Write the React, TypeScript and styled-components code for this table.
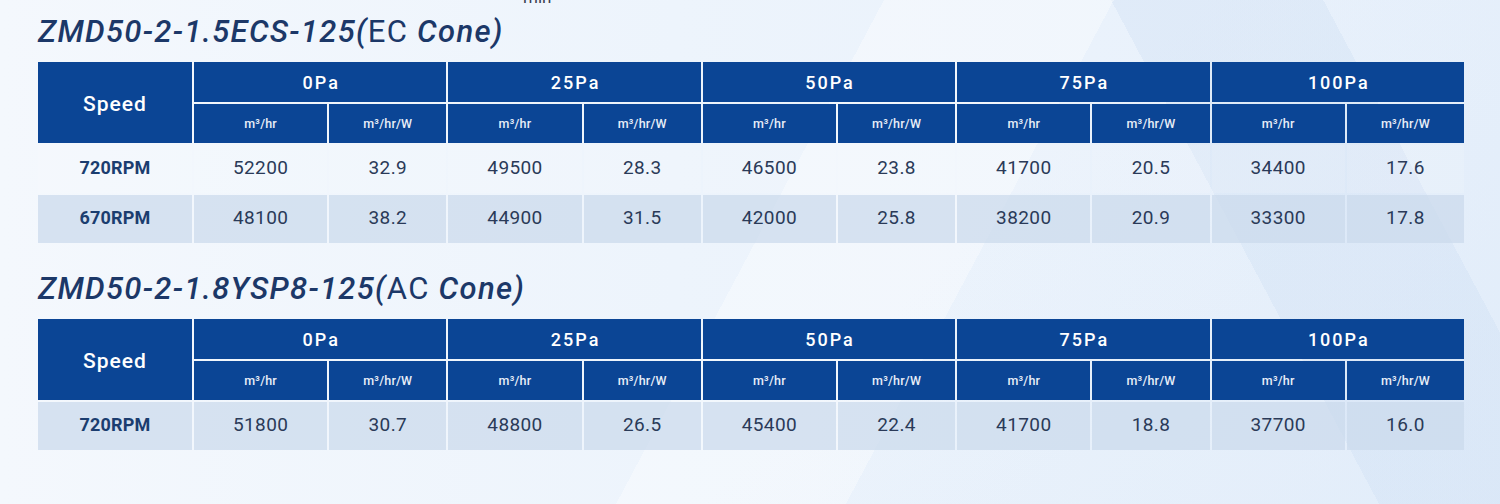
import React from "react";
import styled, { createGlobalStyle } from "styled-components";

const GlobalStyle = createGlobalStyle`
  html, body { margin: 0; padding: 0; }
  body { font-family: Roboto, "Liberation Sans", Arial, sans-serif; }
`;

const Page = styled.div`
  width: 1500px;
  height: 504px;
  box-sizing: border-box;
  padding-left: 38px;
  overflow: hidden;
  background:
    linear-gradient(118deg, transparent 0%, transparent 50%, rgba(255,255,255,0.35) 50%, rgba(255,255,255,0.35) 63%, transparent 63%),
    linear-gradient(62deg, transparent 0%, transparent 78%, rgba(205,222,243,0.35) 78%, rgba(205,222,243,0.35) 90%, transparent 90%),
    linear-gradient(135deg, rgba(255,255,255,0) 60%, rgba(220,233,248,0.5) 100%),
    linear-gradient(90deg, #f4f8fd 0%, #edf4fc 45%, #e7f0fb 100%);
`;

const TopCrop = styled.div`
  height: 5px;
  overflow: hidden;
  padding-left: 485px;
  color: #3a4150;
  font-size: 17px;
  line-height: 17px;
  span { display: block; margin-top: -11px; }
`;

const Section = styled.section<{ $first?: boolean }>`
  margin-top: ${(p) => (p.$first ? "11px" : "30px")};
`;

const Title = styled.h2`
  margin: 0 0 15px 0;
  font-family: Roboto, "Liberation Sans", Arial, sans-serif;
  font-style: italic;
  font-weight: 500;
  font-size: 31px;
  line-height: 31px;
  color: #1c3868;
  letter-spacing: 1.3px;
`;

const Upright = styled.span`
  font-style: normal;
  font-weight: 400;
`;

const Grid = styled.div<{ $rows: number }>`
  width: 1426px;
  display: grid;
  grid-template-columns: 154px repeat(5, 133fr 117fr);
  grid-template-rows: 40px 39px repeat(${(p) => p.$rows}, 48px);
  gap: 2px;
`;

const HeadCell = styled.div<{ $span?: number; $rowSpan?: number }>`
  background: #0b4595;
  color: #ffffff;
  display: flex;
  align-items: center;
  justify-content: center;
  grid-column: span ${(p) => p.$span ?? 1};
  grid-row: span ${(p) => p.$rowSpan ?? 1};
`;

const SpeedHead = styled(HeadCell)`
  font-size: 21px;
  font-weight: 500;
  letter-spacing: 1px;
  padding-top: 3px;
`;

const PressureHead = styled(HeadCell)`
  font-size: 18px;
  font-weight: 500;
  letter-spacing: 2px;
  padding-left: 2px;
`;

const UnitHead = styled(HeadCell)`
  font-size: 12.5px;
  font-weight: 500;
  letter-spacing: 0.2px;
  color: #e8eef8;
`;

const Cell = styled.div<{ $alt?: boolean }>`
  background: ${(p) => (p.$alt ? "rgba(203,218,236,0.72)" : "rgba(255,255,255,0.12)")};
  display: flex;
  align-items: center;
  justify-content: center;
  padding-bottom: 3px;
  font-size: 19px;
  letter-spacing: 0.4px;
  color: #2a3a58;
`;

const SpeedCell = styled(Cell)`
  font-size: 18px;
  font-weight: 700;
  letter-spacing: 0.2px;
  color: #1b3d6f;
`;

const pressures = ["0Pa", "25Pa", "50Pa", "75Pa", "100Pa"];

type Row = { speed: string; values: string[]; alt?: boolean };

const PerfTable: React.FC<{ rows: Row[] }> = ({ rows }) => (
  <Grid $rows={rows.length}>
    <SpeedHead $rowSpan={2}>Speed</SpeedHead>
    {pressures.map((p) => (
      <PressureHead key={p} $span={2}>
        {p}
      </PressureHead>
    ))}
    {pressures.map((p) => (
      <React.Fragment key={p + "u"}>
        <UnitHead>m³/hr</UnitHead>
        <UnitHead>m³/hr/W</UnitHead>
      </React.Fragment>
    ))}
    {rows.map((r) => (
      <React.Fragment key={r.speed + r.values[0]}>
        <SpeedCell $alt={r.alt}>{r.speed}</SpeedCell>
        {r.values.map((v, i) => (
          <Cell key={i} $alt={r.alt}>
            {v}
          </Cell>
        ))}
      </React.Fragment>
    ))}
  </Grid>
);

const ecRows: Row[] = [
  { speed: "720RPM", values: ["52200", "32.9", "49500", "28.3", "46500", "23.8", "41700", "20.5", "34400", "17.6"] },
  { speed: "670RPM", values: ["48100", "38.2", "44900", "31.5", "42000", "25.8", "38200", "20.9", "33300", "17.8"], alt: true },
];

const acRows: Row[] = [
  { speed: "720RPM", values: ["51800", "30.7", "48800", "26.5", "45400", "22.4", "41700", "18.8", "37700", "16.0"], alt: true },
];

export default function App() {
  return (
    <>
      <GlobalStyle />
      <Page>
        <TopCrop>
          <span>min</span>
        </TopCrop>
        <Section $first>
          <Title>
            ZMD50-2-1.5ECS-125(<Upright>EC</Upright> Cone)
          </Title>
          <PerfTable rows={ecRows} />
        </Section>
        <Section>
          <Title>
            ZMD50-2-1.8YSP8-125(<Upright>AC</Upright> Cone)
          </Title>
          <PerfTable rows={acRows} />
        </Section>
      </Page>
    </>
  );
}
